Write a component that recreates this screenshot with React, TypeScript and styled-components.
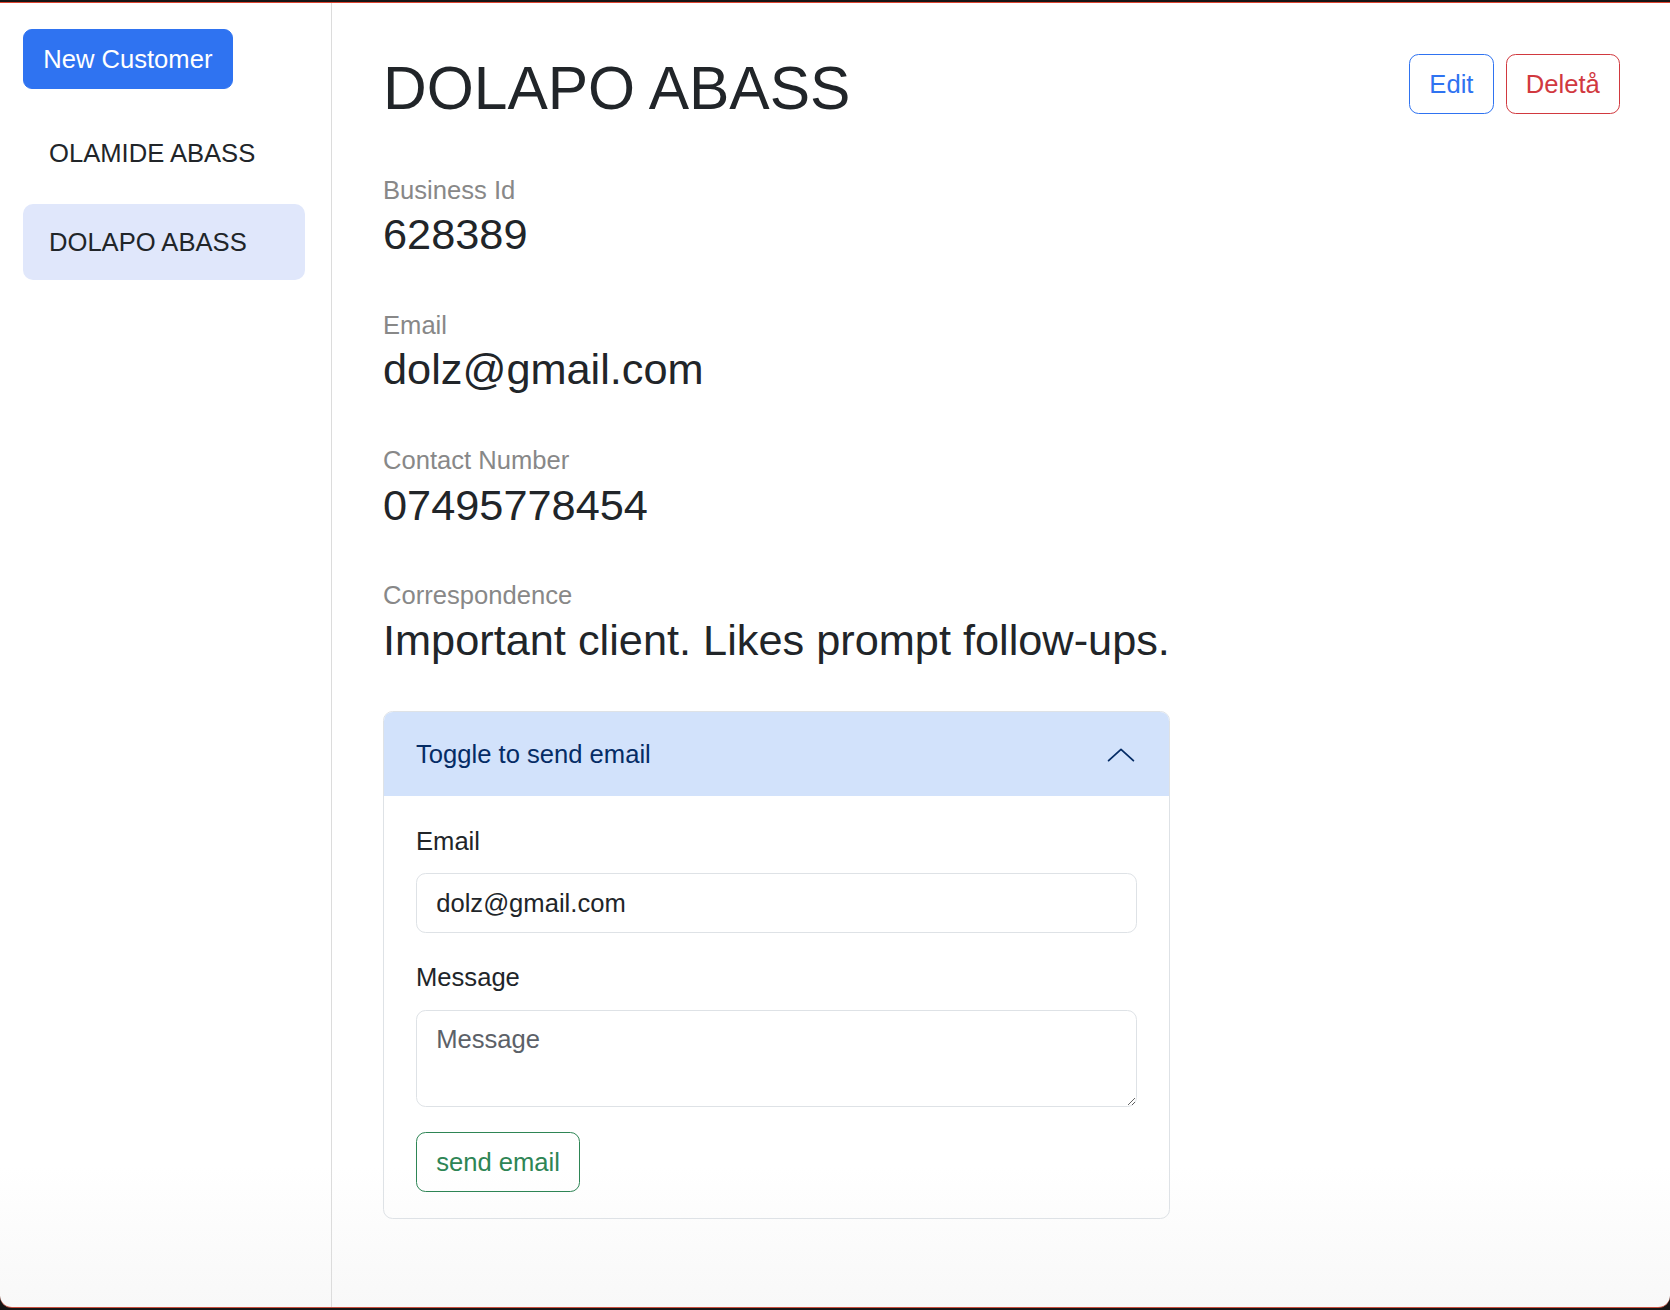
import React from "react";
import styled, { createGlobalStyle } from "styled-components";

const GlobalStyle = createGlobalStyle`
  html, body { margin: 0; padding: 0; background: #161616; }
  body { font-family: "Liberation Sans", Arial, Helvetica, sans-serif; color: #212529; }
  * { box-sizing: border-box; }
`;

const Frame = styled.div`
  width: 1670px;
  height: 1310px;
  padding-top: 2px;
  background: #161616;
  border-top: 2px solid #3f3f3f;
  margin-top: -2px;
`;

const Window = styled.div`
  height: 1306px;
  display: flex;
  background: linear-gradient(to bottom, #ffffff calc(100% - 140px), #f8f8f8 100%);
  border-top: 1px solid #de4430;
  border-bottom: 1px solid #c9503f;
  border-radius: 0 0 12px 12px;
  overflow: hidden;
`;

const Sidebar = styled.aside`
  width: 332px;
  flex: none;
  border-right: 1px solid #dcdcdc;
  padding: 26px 26px 0 23px;
  display: flex;
  flex-direction: column;
  align-items: flex-start;
`;

const PrimaryButton = styled.button`
  font-family: inherit;
  font-size: 25.6px;
  line-height: 38.4px;
  padding: 9.6px 19.2px;
  border: 1px solid #2f73f1;
  background: #2f73f1;
  color: #fff;
  border-radius: 9px;
  margin-bottom: 26.7px;
  cursor: pointer;
`;

const CustomerList = styled.nav`
  align-self: stretch;
  display: flex;
  flex-direction: column;
  gap: 11.5px;
`;

const CustomerItem = styled.a<{ $active?: boolean }>`
  display: block;
  font-size: 25.6px;
  line-height: 38.4px;
  padding: 19.2px 26px;
  border-radius: 10px;
  color: #212529;
  text-decoration: none;
  background: ${(p) => (p.$active ? "#e0e7fb" : "transparent")};
`;

const Main = styled.main`
  flex: 1;
  padding: 48px 50px 0 51px;
  display: flex;
  flex-direction: column;
  gap: 45.5px;
`;

const HeaderRow = styled.div`
  display: flex;
  justify-content: space-between;
  align-items: flex-start;
`;

const Title = styled.h1`
  margin: 0;
  font-size: 60.5px;
  line-height: 74.4px;
  font-weight: 400;
  color: #212529;
`;

const Actions = styled.div`
  display: flex;
  gap: 12px;
  margin-top: 3px;
`;

const OutlineButton = styled.button<{ $color: string }>`
  font-family: inherit;
  font-size: 25.6px;
  line-height: 38.4px;
  padding: 9.6px 19.2px;
  background: transparent;
  border: 1px solid ${(p) => p.$color};
  color: ${(p) => p.$color};
  border-radius: 9.6px;
  cursor: pointer;
`;

const Field = styled.div`
  display: flex;
  flex-direction: column;
`;

const FieldLabel = styled.div`
  font-size: 25.6px;
  line-height: 38.4px;
  color: #888888;
`;

const FieldValue = styled.div`
  font-size: 43.3px;
  line-height: 51.2px;
  color: #212529;
`;

const Accordion = styled.section`
  width: 787px;
  border: 1px solid #dee2e6;
  border-radius: 9.6px;
  overflow: hidden;
`;

const AccordionHeader = styled.button`
  width: 100%;
  height: 84px;
  display: flex;
  align-items: center;
  justify-content: space-between;
  padding: 0 32px 0 32px;
  background: #d2e2fb;
  border: none;
  font-family: inherit;
  font-size: 25.6px;
  color: #052c65;
  cursor: pointer;
  text-align: left;
`;

const Chevron = styled.svg`
  width: 32px;
  height: 32px;
  margin-top: 2px;
`;

const AccordionBody = styled.div`
  padding: 25.6px 32px 26.6px;
  display: flex;
  flex-direction: column;
  align-items: flex-start;
`;

const FormGroup = styled.div`
  align-self: stretch;
  margin-bottom: 25.6px;
`;

const FormLabel = styled.label`
  display: block;
  font-size: 25.6px;
  line-height: 38.4px;
  margin-bottom: 12.8px;
  color: #212529;
`;

const TextInput = styled.input`
  display: block;
  width: 100%;
  font-family: inherit;
  font-size: 25.6px;
  line-height: 38.4px;
  padding: 9.6px 19.2px;
  border: 1px solid #dee2e6;
  border-radius: 9.6px;
  color: #212529;
  background: #fff;
  outline: none;
`;

const TextArea = styled.textarea`
  display: block;
  width: 100%;
  height: 97px;
  font-family: inherit;
  font-size: 25.6px;
  line-height: 38.4px;
  padding: 9.6px 19.2px;
  border: 1px solid #dee2e6;
  border-radius: 9.6px;
  color: #212529;
  background: #fff;
  outline: none;
  &::placeholder { color: #5c6168; }
`;

export default function App() {
  return (
    <>
      <GlobalStyle />
      <Frame>
        <Window>
          <Sidebar>
            <PrimaryButton>New Customer</PrimaryButton>
            <CustomerList>
              <CustomerItem>OLAMIDE ABASS</CustomerItem>
              <CustomerItem $active>DOLAPO ABASS</CustomerItem>
            </CustomerList>
          </Sidebar>
          <Main>
            <HeaderRow>
              <Title>DOLAPO ABASS</Title>
              <Actions>
                <OutlineButton $color="#2f73f1">Edit</OutlineButton>
                <OutlineButton $color="#d1393f">Deletå</OutlineButton>
              </Actions>
            </HeaderRow>
            <Field>
              <FieldLabel>Business Id</FieldLabel>
              <FieldValue>628389</FieldValue>
            </Field>
            <Field>
              <FieldLabel>Email</FieldLabel>
              <FieldValue>dolz@gmail.com</FieldValue>
            </Field>
            <Field>
              <FieldLabel>Contact Number</FieldLabel>
              <FieldValue>07495778454</FieldValue>
            </Field>
            <Field>
              <FieldLabel>Correspondence</FieldLabel>
              <FieldValue>Important client. Likes prompt follow-ups.</FieldValue>
            </Field>
            <Accordion>
              <AccordionHeader>
                <span>Toggle to send email</span>
                <Chevron viewBox="0 0 16 16" fill="none">
                  <path d="M1.8 10.8 L8 5.2 L14.2 10.8" stroke="#052c65" strokeWidth="0.9" strokeLinecap="round" strokeLinejoin="round" />
                </Chevron>
              </AccordionHeader>
              <AccordionBody>
                <FormGroup>
                  <FormLabel>Email</FormLabel>
                  <TextInput defaultValue="dolz@gmail.com" />
                </FormGroup>
                <FormGroup>
                  <FormLabel>Message</FormLabel>
                  <TextArea placeholder="Message" />
                </FormGroup>
                <OutlineButton $color="#2e8555">send email</OutlineButton>
              </AccordionBody>
            </Accordion>
          </Main>
        </Window>
      </Frame>
    </>
  );
}
